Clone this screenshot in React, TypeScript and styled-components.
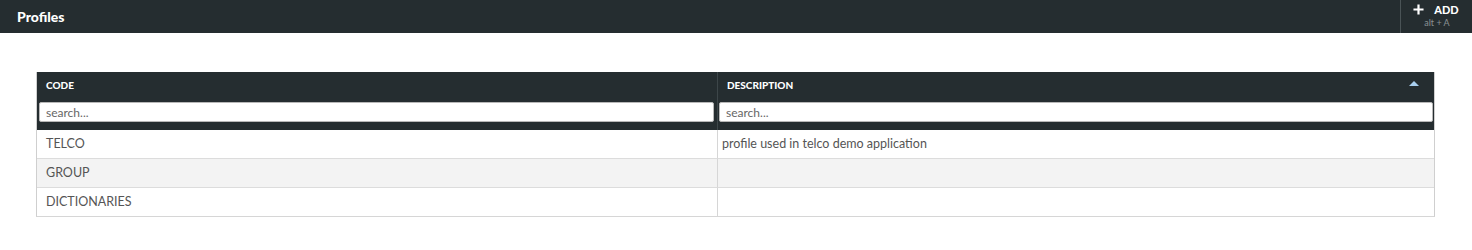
import styled, { createGlobalStyle } from "styled-components"

const GlobalStyle = createGlobalStyle`
  body {
    margin: 0;
    font-family: Lato, "Open Sans", sans-serif;
    background: #fff;
  }
`

const rows = [
  { code: "TELCO", description: "profile used in telco demo application" },
  { code: "GROUP", description: "" },
  { code: "DICTIONARIES", description: "" },
]

const App = () => {
  return (
    <>
      <GlobalStyle />
      <TopBar>
        <Title>Profiles</Title>
        <AddButton>
          <AddLine>
            <PlusIcon viewBox="0 0 12 12">
              <path d="M6 0.5v11M0.5 6h11" stroke="#fff" strokeWidth="2.4" />
            </PlusIcon>
            <AddText>ADD</AddText>
          </AddLine>
          <Shortcut>alt + A</Shortcut>
        </AddButton>
      </TopBar>

      <Content>
        <Table>
          <HeadCell>CODE</HeadCell>
          <HeadCell $last>
            DESCRIPTION
            <SortArrow />
          </HeadCell>
          <SearchCell>
            <SearchInput placeholder="search..." />
          </SearchCell>
          <SearchCell $last>
            <SearchInput placeholder="search..." />
          </SearchCell>
          {rows.map((row, i) => (
            <Row key={row.code} $odd={i % 2 === 1} $first={i === 0}>
              <Cell>{row.code}</Cell>
              <Cell $desc>{row.description}</Cell>
            </Row>
          ))}
        </Table>
      </Content>
    </>
  )
}

export default App

const TopBar = styled.header`
  display: flex;
  align-items: center;
  justify-content: space-between;
  height: 33px;
  background: #252d30;
`

const Title = styled.h1`
  margin: 0 0 0 17px;
  font-size: 14px;
  font-weight: 900;
  color: #fff;
`

const AddButton = styled.div`
  display: flex;
  flex-direction: column;
  align-items: center;
  justify-content: center;
  height: 100%;
  width: 72px;
  padding: 0 13px 0 12px;
  box-sizing: border-box;
  border-left: 1px solid #4a5356;
`

const AddLine = styled.div`
  display: flex;
  align-items: center;
  gap: 10px;
  margin-top: -3px;
`

const PlusIcon = styled.svg`
  width: 11px;
  height: 11px;
`

const AddText = styled.span`
  font-size: 11px;
  font-weight: 900;
  color: #fff;
`

const Shortcut = styled.span`
  font-size: 9px;
  color: #8a9194;
  margin-top: 1px;
  margin-left: 2px;
`

const Content = styled.main`
  padding: 39px 37px 0 36px;
`

const Table = styled.div`
  display: grid;
  grid-template-columns: 680px 1fr;
  border-right: 1px solid #cfcfcf;
  border-left: 1px solid #cfcfcf;
  border-bottom: 1px solid #d6d6d6;
`

const HeadCell = styled.div<{ $last?: boolean }>`
  display: flex;
  align-items: center;
  justify-content: space-between;
  height: 29px;
  padding: 0 15px 3px 9px;
  box-sizing: border-box;
  background: #252d30;
  color: #fff;
  font-size: 10px;
  font-weight: 900;
  border-left: ${(p) => (p.$last ? "1px solid #3d4649" : "none")};
`

const SortArrow = styled.span`
  width: 0;
  height: 0;
  border-left: 5px solid transparent;
  border-right: 5px solid transparent;
  border-bottom: 5px solid #a9cfee;
  margin-bottom: 3px;
`

const SearchCell = styled.div<{ $last?: boolean }>`
  height: 29px;
  padding: 1px ${(p) => (p.$last ? "1px 0 1px" : "3px 0 2px")};
  box-sizing: border-box;
  background: #252d30;
  border-left: ${(p) => (p.$last ? "1px solid #3d4649" : "none")};
`

const SearchInput = styled.input`
  display: block;
  width: 100%;
  height: 20px;
  box-sizing: border-box;
  border: 1px solid #b8b8b8;
  border-radius: 2px;
  padding: 0 6px;
  font-family: Lato, "Open Sans", sans-serif;
  font-size: 12px;
  color: #333;
  outline: none;

  &::placeholder {
    color: #666;
  }
`

const Row = styled.div<{ $odd: boolean; $first: boolean }>`
  display: contents;

  & > div {
    background: ${(p) => (p.$odd ? "#f3f3f3" : "#fff")};
    height: ${(p) => (p.$first ? "28px" : "29px")};
    border-top: ${(p) => (p.$first ? "none" : "1px solid #dcdcdc")};
  }
`

const Cell = styled.div<{ $desc?: boolean }>`
  box-sizing: border-box;
  display: flex;
  align-items: center;
  padding: 0 0 2px ${(p) => (p.$desc ? "4px" : "9px")};
  border-left: ${(p) => (p.$desc ? "1px solid #d6d6d6" : "none")};
  font-size: 12.5px;
  color: #555;
`
